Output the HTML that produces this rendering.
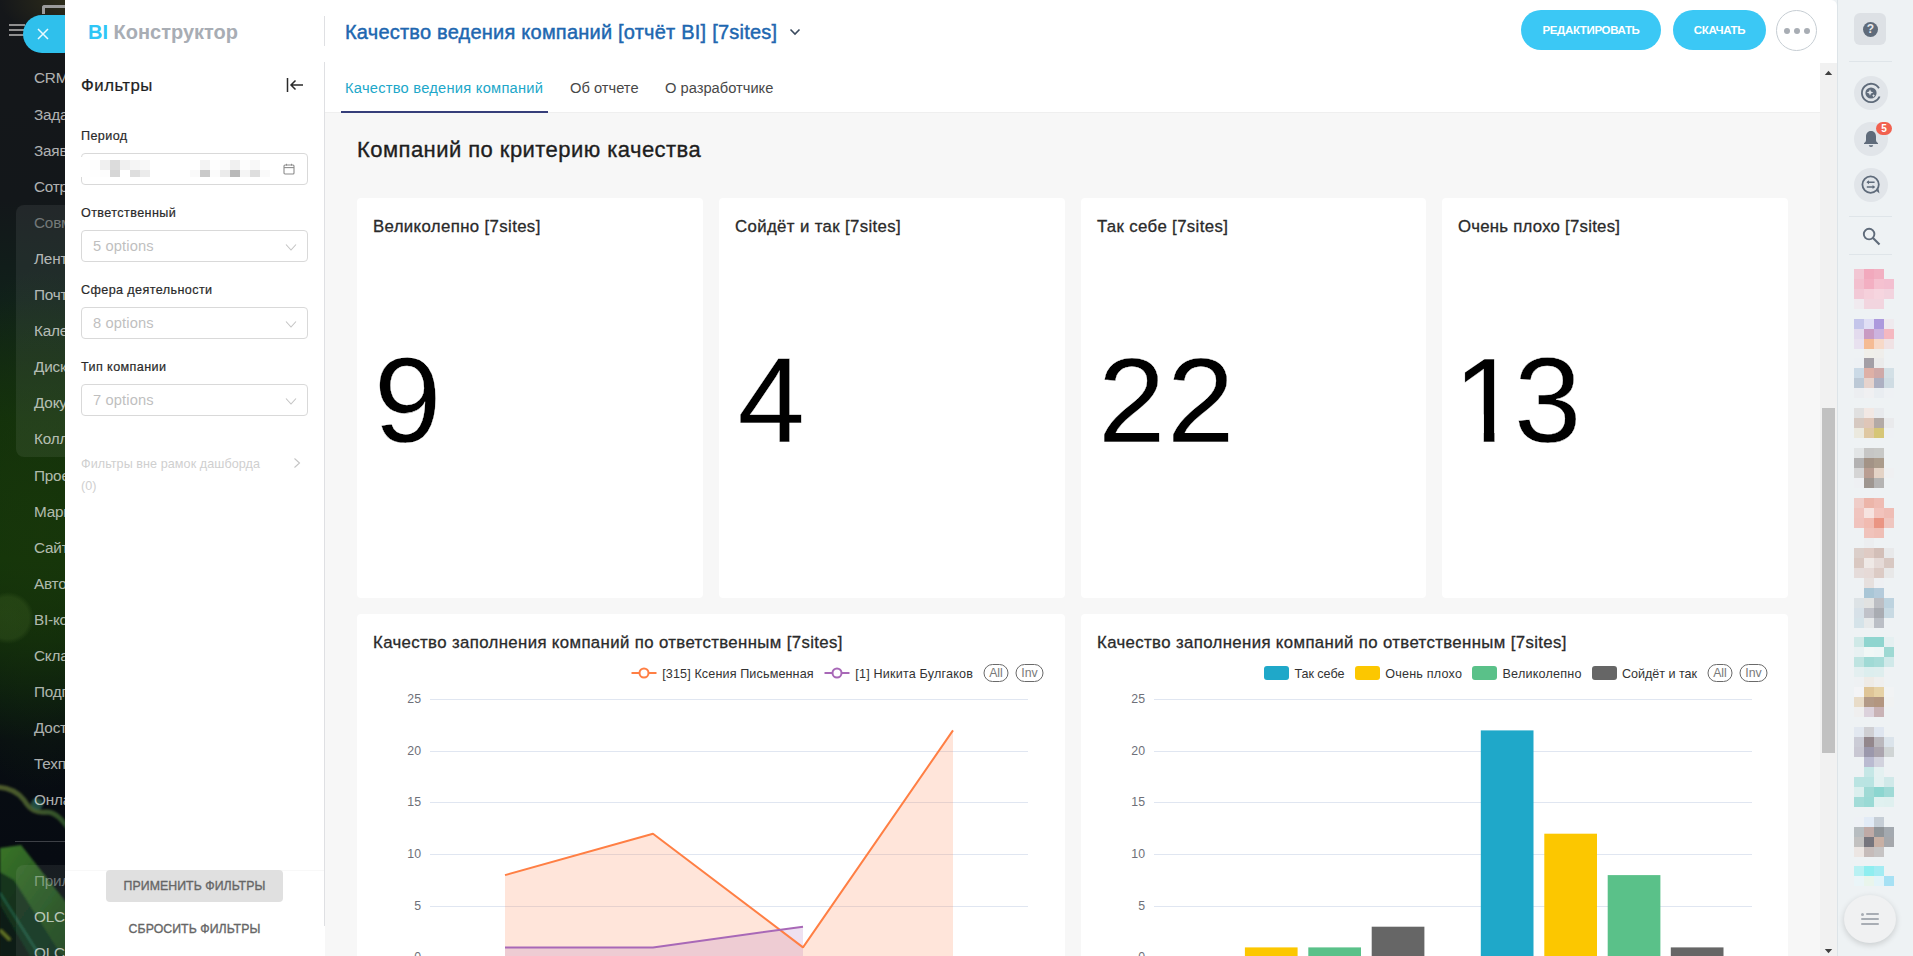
<!DOCTYPE html>
<html lang="ru">
<head>
<meta charset="utf-8">
<title>BI Конструктор</title>
<style>
*{box-sizing:border-box;margin:0;padding:0}
html,body{width:1913px;height:956px;overflow:hidden}
body{position:relative;font-family:"Liberation Sans",sans-serif;background:#0a1210;color:#1e1e1e}
.abs{position:absolute}
/* ---------- left dark menu ---------- */
#lm{position:absolute;left:0;top:0;width:80px;height:956px;overflow:hidden;
 background:
  radial-gradient(ellipse 75px 40px at 75px 0px,rgba(52,50,26,.9),rgba(52,50,26,0) 100%),
  radial-gradient(circle 26px at 8px 618px,rgba(70,105,40,.33) 0,rgba(70,105,40,.3) 80%,rgba(70,105,40,0) 100%),
  radial-gradient(ellipse 120px 260px at 40px 530px,rgba(24,54,10,.8),rgba(24,54,10,0) 100%),
  linear-gradient(180deg,#15171a 0px,#13171a 200px,#10201a 300px,#12300c 420px,#14360a 560px,#10290c 640px,#0a1810 700px,#080d12 740px,#070b12 860px,#0b1a14 956px)}
#lm .mi{position:absolute;left:34px;font-size:15.3px;line-height:20px;color:rgba(255,255,255,.68);white-space:nowrap;letter-spacing:-.2px}
#lm .mi.dim{color:rgba(255,255,255,.38)}
#lm .grp{position:absolute;left:16px;width:70px;border-radius:8px;background:rgba(255,255,255,.07)}
/* ---------- slider panel ---------- */
#panel{position:absolute;left:65px;top:0;width:1772px;height:956px;background:#fff;border-radius:0 6px 0 0;overflow:hidden}
#rbar{position:absolute;left:1837px;top:0;width:76px;height:956px;background:#eef2f4;border-left:1px solid #dde4e8}
#rbk{position:absolute;left:1820px;top:0;width:20px;height:20px;background:#eef2f4}

/* panel internals: coordinates relative to panel (x-65) */
#panel .logo{position:absolute;left:23px;top:19px;font-size:20px;line-height:26px;font-weight:bold;letter-spacing:0;white-space:nowrap}
#panel .logo b{color:#2fc6f6}
#panel .logo span{color:#a8adb4}
.vline{position:absolute;left:259px;width:1px;background:#dfe0e3}
#title{position:absolute;left:280px;top:19px;font-size:20px;line-height:26px;color:#2067b0;white-space:nowrap;-webkit-text-stroke:.45px #2067b0;letter-spacing:.22px}
.btn{position:absolute;top:10px;height:40px;border-radius:20px;background:#3bc8f5;color:#fff;font-weight:bold;font-size:11.5px;line-height:40px;text-align:center;white-space:nowrap;letter-spacing:-.35px}
#more{position:absolute;left:1711px;top:10px;width:41px;height:41px;border-radius:50%;border:1px solid #c6cdd3;background:#fff}
#more i{position:absolute;top:17px;width:6px;height:6px;border-radius:50%;background:#a8adb4}
/* filter bar */
#fb{position:absolute;left:0;top:62px;width:259px;height:894px;background:#fff}
#fb .h{position:absolute;left:16px;top:14px;font-size:16.8px;line-height:20px;color:#1e1e1e;-webkit-text-stroke:.2px #1e1e1e;letter-spacing:.5px}
#fb .lbl{position:absolute;left:16px;margin-top:1px;font-size:12.6px;line-height:16px;color:#2a2a2a;-webkit-text-stroke:.2px #2a2a2a;letter-spacing:.4px;white-space:nowrap}
#fb .sel{position:absolute;left:16px;width:227px;height:32px;border:1px solid #d9d9d9;border-radius:4px;background:#fff;font-size:14.7px;line-height:30px;padding-left:11px;color:#bfbfbf;letter-spacing:.12px}
#fb .sel svg{position:absolute;right:10px;top:10px}
#fb .out{position:absolute;left:16px;top:391px;font-size:12.6px;line-height:22px;color:#cfcfcf;letter-spacing:.06px;white-space:nowrap}
#fb .apply{position:absolute;left:41px;top:808px;width:177px;height:32px;border-radius:4px;background:#e0e0e0;color:#666;font-size:12.3px;line-height:32px;text-align:center;-webkit-text-stroke:.35px #666;letter-spacing:.06px}
#fb .reset{position:absolute;left:41px;top:851px;width:177px;height:32px;color:#666;font-size:12.3px;line-height:32px;text-align:center;-webkit-text-stroke:.35px #666;letter-spacing:.06px}
/* main */
#main{position:absolute;left:260px;top:62px;width:1495px;height:894px;background:#f7f7f7;overflow:hidden}
#tabs{position:absolute;left:0;top:0;width:1495px;height:51px;background:#fff;border-bottom:1px solid #efefef}
#tabs .t{position:absolute;top:16px;font-size:14.7px;line-height:20px;color:#484848;white-space:nowrap;letter-spacing:0}
#tabs .t.a{color:#20a7c9;letter-spacing:.24px}
#tabs .ink{position:absolute;left:16px;top:49px;width:207px;height:2px;background:#363e7a}
#sect{position:absolute;left:32px;top:74px;font-size:22px;line-height:28px;color:#1e1e1e;white-space:nowrap;-webkit-text-stroke:.35px #1e1e1e;letter-spacing:.45px}
.card{position:absolute;background:#fff;border-radius:4px}
.card .ct{position:absolute;left:16px;top:18px;font-size:16.8px;line-height:22px;color:#2a2a2a;white-space:nowrap;-webkit-text-stroke:.3px #2a2a2a;letter-spacing:.37px}
.card .big{position:absolute;left:17px;top:132.3px;font-size:121px;line-height:140px;color:#000;white-space:nowrap;-webkit-text-stroke:.3px #fff;letter-spacing:1.7px}
.card .big .one{display:inline-block;letter-spacing:-6.7px;margin-left:-5.7px;clip-path:polygon(0 0,.3395em 0,.3395em 100%,.252em 100%,.252em 60%,0 60%)}
/* scrollbar */
#sb{position:absolute;left:1755px;top:63px;width:17px;height:893px;background:#f1f1f1}
#sb .th{position:absolute;left:2px;top:345px;width:13px;height:345px;background:#c1c1c1}

.rdiv{left:11px;width:43px;height:1px;background:#dfe5e9}
.rc{left:16px;width:34px;height:34px;border-radius:50%;background:#e1e5e9}
</style>
</head>
<body>
<div id="lm">
<svg class="abs" style="left:0;top:760px" width="80" height="196" viewBox="0 760 80 196">
<defs><linearGradient id="lf" x1="0" y1="0" x2="1" y2="1"><stop offset="0" stop-color="#3a7429"/><stop offset=".55" stop-color="#245420"/><stop offset="1" stop-color="#173a18"/></linearGradient>
<linearGradient id="st" x1="0" y1="0" x2="1" y2="0"><stop offset="0" stop-color="#7e8f3c"/><stop offset=".5" stop-color="#6a8a3e"/><stop offset="1" stop-color="#3f7a35"/></linearGradient>
<filter id="bl"><feGaussianBlur stdDeviation="1.2"/></filter></defs>
<g filter="url(#bl)">
<path d="M0 848 L21 845 L80 920 L80 956 L0 956Z" fill="url(#lf)"/>
<path d="M0 872 L14 880 L62 956 L0 956Z" fill="#0e2c1f" opacity=".85"/>
<path d="M0 905 L30 956 L0 956Z" fill="#0a1a14" opacity=".9"/>
<path d="M0 893 L40 956" stroke="#2a7a5a" stroke-width="2" opacity=".6" fill="none"/>
<path d="M0 930 L10 940" stroke="#8a9a30" stroke-width="3" opacity=".7" fill="none"/>
<path d="M-2 787 C10 788 18 792 24 800 C30 810 36 813 46 812 C56 812 62 820 70 830" stroke="url(#st)" stroke-width="5" fill="none" opacity=".6"/>
<circle cx="37" cy="804" r="6" fill="#2d6a55" opacity=".7"/>
</g></svg>
<div class="grp" style="top:205px;height:252px"></div>
<div class="grp" style="top:865px;height:120px"></div>
<div class="abs" style="left:15px;top:841px;width:60px;height:1px;background:rgba(255,255,255,.22)"></div>
<div class="mi" style="top:68px">CRM</div>
<div class="mi" style="top:105px">Задачи и Проекты</div>
<div class="mi" style="top:141px">Заявки</div>
<div class="mi" style="top:177px">Сотрудники</div>
<div class="mi dim" style="top:213px">Совместная работа</div>
<div class="mi" style="top:249px">Лента</div>
<div class="mi" style="top:285px">Почта</div>
<div class="mi" style="top:321px">Календарь</div>
<div class="mi" style="top:357px">Диск</div>
<div class="mi" style="top:393px">Документы</div>
<div class="mi" style="top:429px">Коллабы</div>
<div class="mi" style="top:466px">Проекты</div>
<div class="mi" style="top:502px">Маркетинг</div>
<div class="mi" style="top:538px">Сайты и Магазины</div>
<div class="mi" style="top:574px">Автоматизация</div>
<div class="mi" style="top:610px">BI-конструктор</div>
<div class="mi" style="top:646px">Склад</div>
<div class="mi" style="top:682px">Подпись</div>
<div class="mi" style="top:718px">Доставка</div>
<div class="mi" style="top:754px">Техподдержка</div>
<div class="mi" style="top:790px">Онлайн-запись</div>
<div class="mi dim" style="top:871px">Приложения</div>
<div class="mi" style="top:907px">OLCK</div>
<div class="mi" style="top:943px">OLCK</div>
<div class="abs" style="left:9px;top:24px;width:16px;height:2px;background:#8f8f8f;box-shadow:0 5px 0 #8f8f8f,0 10px 0 #8f8f8f"></div>
<div class="abs" style="left:42px;top:5px;width:30px;height:9px;border:3px solid #9b9b9b;border-bottom:none;border-right:none;border-radius:3px 0 0 0"></div>
<div class="abs" style="left:23px;top:15px;width:60px;height:38px;border-radius:19px;background:#2fc0ec"></div>
<svg class="abs" style="left:37px;top:28px" width="12" height="12" viewBox="0 0 12 12"><path d="M1 1 L11 11 M11 1 L1 11" stroke="#eafaff" stroke-width="1.5"/></svg>
</div>
<div id="rbk"></div>
<div id="panel">
<div class="logo"><b>BI</b> <span>Конструктор</span></div>
<div class="vline" style="top:16px;height:30px"></div>
<div class="vline" style="top:62px;height:864px"></div>
<div id="title">Качество ведения компаний [отчёт BI] [7sites]</div>
<svg class="abs" style="left:724px;top:27px" width="12" height="10" viewBox="0 0 12 10"><path d="M1.5 2.5 L6 7 L10.5 2.5" fill="none" stroke="#3a4a5e" stroke-width="1.6"/></svg>
<div class="btn" style="left:1456px;width:140px">РЕДАКТИРОВАТЬ</div>
<div class="btn" style="left:1608px;width:93px">СКАЧАТЬ</div>
<div id="more"><i style="left:7px"></i><i style="left:17px"></i><i style="left:27px"></i></div>

<div id="fb">
 <div class="h">Фильтры</div>
 <svg class="abs" style="left:221px;top:14px" width="18" height="18" viewBox="0 0 18 18"><path d="M1.5 2 V16 M17 9 H5 M9.5 4.5 L5 9 L9.5 13.5" fill="none" stroke="#2a2a2a" stroke-width="1.5"/></svg>
 <div class="lbl" style="top:65px">Период</div>
 <div class="sel" style="top:91px" id="per"><svg class="abs" style="left:-1px;top:-1px" width="227" height="32" viewBox="0 0 227 32" shape-rendering="crispEdges"><rect x="0" y="4" width="9" height="20" fill="#fff"/><rect x="9" y="7" width="10" height="10" fill="#fdfdfd"/><rect x="9" y="17" width="10" height="7" fill="#fefefe"/><rect x="19" y="7" width="10" height="10" fill="#f0f0f0"/><rect x="19" y="17" width="10" height="7" fill="#fdfdfd"/><rect x="29" y="7" width="10" height="10" fill="#dcdcdc"/><rect x="29" y="17" width="10" height="7" fill="#d6d6d6"/><rect x="39" y="7" width="10" height="10" fill="#f0f0f0"/><rect x="39" y="17" width="10" height="7" fill="#ffffff"/><rect x="49" y="7" width="10" height="10" fill="#f5f5f5"/><rect x="49" y="17" width="10" height="7" fill="#dedede"/><rect x="59" y="7" width="10" height="10" fill="#f8f8f8"/><rect x="59" y="17" width="10" height="7" fill="#ebebeb"/><rect x="109" y="7" width="10" height="10" fill="#ffffff"/><rect x="109" y="17" width="10" height="7" fill="#fafafa"/><rect x="119" y="7" width="10" height="10" fill="#f3f3f3"/><rect x="119" y="17" width="10" height="7" fill="#c9c9c9"/><rect x="129" y="7" width="10" height="10" fill="#fefefe"/><rect x="129" y="17" width="10" height="7" fill="#fbfbfb"/><rect x="139" y="7" width="10" height="10" fill="#fafafa"/><rect x="139" y="17" width="10" height="7" fill="#ebebeb"/><rect x="149" y="7" width="10" height="10" fill="#f0f0f0"/><rect x="149" y="17" width="10" height="7" fill="#b9b9b9"/><rect x="159" y="7" width="10" height="10" fill="#fdfdfd"/><rect x="159" y="17" width="10" height="7" fill="#f5f5f5"/><rect x="169" y="7" width="10" height="10" fill="#f8f8f8"/><rect x="169" y="17" width="10" height="7" fill="#dedede"/><rect x="179" y="7" width="10" height="10" fill="#ffffff"/><rect x="179" y="17" width="10" height="7" fill="#fafafa"/></svg><svg class="abs" style="left:201px;top:9px" width="12" height="12" viewBox="0 0 12 12"><rect x="1" y="2" width="10" height="9" rx="1" fill="none" stroke="#8c8c8c" stroke-width="1.1"/><path d="M1 4.6 H11" stroke="#8c8c8c" stroke-width="1.1"/><path d="M3.5 0.8 V2.6 M8.5 0.8 V2.6" stroke="#8c8c8c" stroke-width="1"/></svg></div>
 <div class="lbl" style="top:142px">Ответственный</div>
 <div class="sel" style="top:168px">5 options<svg width="12" height="12" viewBox="0 0 12 12"><path d="M1 3.5 L6 9 L11 3.5" fill="none" stroke="#c4c4c4" stroke-width="1.1"/></svg></div>
 <div class="lbl" style="top:219px">Сфера деятельности</div>
 <div class="sel" style="top:245px">8 options<svg width="12" height="12" viewBox="0 0 12 12"><path d="M1 3.5 L6 9 L11 3.5" fill="none" stroke="#c4c4c4" stroke-width="1.1"/></svg></div>
 <div class="lbl" style="top:296px">Тип компании</div>
 <div class="sel" style="top:322px">7 options<svg width="12" height="12" viewBox="0 0 12 12"><path d="M1 3.5 L6 9 L11 3.5" fill="none" stroke="#c4c4c4" stroke-width="1.1"/></svg></div>
 <div class="out">Фильтры вне рамок дашборда<br>(0)</div>
 <svg class="abs" style="left:227px;top:395px" width="10" height="12" viewBox="0 0 10 12"><path d="M2.5 1.5 L7.5 6 L2.5 10.5" fill="none" stroke="#c4c4c4" stroke-width="1.1"/></svg>
 <div class="abs" style="left:0;top:808px;width:259px;height:1px;background:#f8f8f8"></div>
 <div class="apply">ПРИМЕНИТЬ ФИЛЬТРЫ</div>
 <div class="reset">СБРОСИТЬ ФИЛЬТРЫ</div>
</div>

<div id="main">
 <div id="tabs">
  <div class="t a" style="left:20px">Качество ведения компаний</div>
  <div class="t" style="left:245px">Об отчете</div>
  <div class="t" style="left:340px">О разработчике</div>
  <div class="ink"></div>
 </div>
 <div id="sect">Компаний по критерию качества</div>
 <div class="card" style="left:32px;top:136px;width:346px;height:400px"><div class="ct">Великолепно [7sites]</div><div class="big">9</div></div>
 <div class="card" style="left:394px;top:136px;width:346px;height:400px"><div class="ct">Сойдёт и так [7sites]</div><div class="big" style="left:18.5px">4</div></div>
 <div class="card" style="left:756px;top:136px;width:345px;height:400px"><div class="ct">Так себе [7sites]</div><div class="big">22</div></div>
 <div class="card" style="left:1117px;top:136px;width:346px;height:400px"><div class="ct" style="letter-spacing:.24px">Очень плохо [7sites]</div><div class="big"><span class="one">1</span>3</div></div>
 <div class="card" id="c1" style="left:32px;top:552px;width:708px;height:360px"><div class="ct">Качество заполнения компаний по ответственным [7sites]</div></div>
 <div class="card" id="c2" style="left:756px;top:552px;width:707px;height:360px"><div class="ct">Качество заполнения компаний по ответственным [7sites]</div></div>
<svg class="abs" style="left:0;top:0" width="1495" height="894" viewBox="0 0 1495 894" font-family="Liberation Sans, sans-serif">
<line x1="105" x2="703" y1="637.5" y2="637.5" stroke="#e0e6f1" stroke-width="1"/>
<text x="96" y="640.7" text-anchor="end" font-size="12.3" fill="#6e7079">25</text>
<line x1="105" x2="703" y1="689.5" y2="689.5" stroke="#e0e6f1" stroke-width="1"/>
<text x="96" y="692.7" text-anchor="end" font-size="12.3" fill="#6e7079">20</text>
<line x1="105" x2="703" y1="740.5" y2="740.5" stroke="#e0e6f1" stroke-width="1"/>
<text x="96" y="743.7" text-anchor="end" font-size="12.3" fill="#6e7079">15</text>
<line x1="105" x2="703" y1="792.5" y2="792.5" stroke="#e0e6f1" stroke-width="1"/>
<text x="96" y="795.7" text-anchor="end" font-size="12.3" fill="#6e7079">10</text>
<line x1="105" x2="703" y1="844.5" y2="844.5" stroke="#e0e6f1" stroke-width="1"/>
<text x="96" y="847.7" text-anchor="end" font-size="12.3" fill="#6e7079">5</text>
<line x1="105" x2="703" y1="895.5" y2="895.5" stroke="#e0e6f1" stroke-width="1"/>
<text x="96" y="898.7" text-anchor="end" font-size="12.3" fill="#6e7079">0</text>
<line x1="829" x2="1427" y1="637.5" y2="637.5" stroke="#e0e6f1" stroke-width="1"/>
<text x="820" y="640.7" text-anchor="end" font-size="12.3" fill="#6e7079">25</text>
<line x1="829" x2="1427" y1="689.5" y2="689.5" stroke="#e0e6f1" stroke-width="1"/>
<text x="820" y="692.7" text-anchor="end" font-size="12.3" fill="#6e7079">20</text>
<line x1="829" x2="1427" y1="740.5" y2="740.5" stroke="#e0e6f1" stroke-width="1"/>
<text x="820" y="743.7" text-anchor="end" font-size="12.3" fill="#6e7079">15</text>
<line x1="829" x2="1427" y1="792.5" y2="792.5" stroke="#e0e6f1" stroke-width="1"/>
<text x="820" y="795.7" text-anchor="end" font-size="12.3" fill="#6e7079">10</text>
<line x1="829" x2="1427" y1="844.5" y2="844.5" stroke="#e0e6f1" stroke-width="1"/>
<text x="820" y="847.7" text-anchor="end" font-size="12.3" fill="#6e7079">5</text>
<line x1="829" x2="1427" y1="895.5" y2="895.5" stroke="#e0e6f1" stroke-width="1"/>
<text x="820" y="898.7" text-anchor="end" font-size="12.3" fill="#6e7079">0</text>
<path d="M180.0 813.1 L328.0 771.7 L478.0 885.4 L628.0 668.4 L628.0 895.7 L180.0 895.7 Z" fill="#ff7f44" fill-opacity=".2"/>
<path d="M180.0 885.4 L328.0 885.4 L478.0 864.7 L478.0 895.7 L180.0 895.7 Z" fill="#a868b7" fill-opacity=".2"/>
<path d="M180.0 813.1 L328.0 771.7 L478.0 885.4 L628.0 668.4" fill="none" stroke="#ff7f44" stroke-width="2" stroke-linejoin="bevel"/>
<path d="M180.0 885.4 L328.0 885.4 L478.0 864.7" fill="none" stroke="#a868b7" stroke-width="2" stroke-linejoin="bevel"/>
<rect x="919.9" y="885.4" width="52.7" height="15.3" fill="#fcc700"/>
<rect x="983.3" y="885.4" width="52.7" height="15.3" fill="#5ac189"/>
<rect x="1046.7" y="864.7" width="52.7" height="36.0" fill="#666666"/>
<rect x="1155.8" y="668.4" width="52.7" height="232.3" fill="#1fa8c9"/>
<rect x="1219.3" y="771.7" width="52.7" height="129.0" fill="#fcc700"/>
<rect x="1282.7" y="813.1" width="52.7" height="87.6" fill="#5ac189"/>
<rect x="1345.8" y="885.4" width="52.7" height="15.3" fill="#666666"/>
<line x1="306.5" x2="331.5" y1="611" y2="611" stroke="#ff7f44" stroke-width="2"/><circle cx="319.0" cy="611" r="4.5" fill="#fff" stroke="#ff7f44" stroke-width="2"/>
<text x="337.2" y="615.5" font-size="12.6" fill="#333" letter-spacing=".12">[315] Ксения Письменная</text>
<line x1="499.5" x2="524.5" y1="611" y2="611" stroke="#a868b7" stroke-width="2"/><circle cx="512.0" cy="611" r="4.5" fill="#fff" stroke="#a868b7" stroke-width="2"/>
<text x="530.3" y="615.5" font-size="12.6" fill="#333" letter-spacing=".18">[1] Никита Булгаков</text>
<rect x="659.0" y="602.5" width="24" height="17" rx="8.5" fill="#fff" stroke="#6a6a6a" stroke-width="1"/><text x="671.0" y="615.2" font-size="12.3" fill="#7a7a7a" text-anchor="middle">All</text>
<rect x="691.0" y="602.5" width="27" height="17" rx="8.5" fill="#fff" stroke="#6a6a6a" stroke-width="1"/><text x="704.5" y="615.2" font-size="12.3" fill="#7a7a7a" text-anchor="middle">Inv</text>
<rect x="939" y="604" width="25" height="14" rx="3" fill="#1fa8c9"/>
<text x="969.4" y="615.5" font-size="12.6" fill="#333" letter-spacing="-.05">Так себе</text>
<rect x="1030" y="604" width="25" height="14" rx="3" fill="#fcc700"/>
<text x="1060.3" y="615.5" font-size="12.6" fill="#333" letter-spacing=".19">Очень плохо</text>
<rect x="1147" y="604" width="25" height="14" rx="3" fill="#5ac189"/>
<text x="1177.5" y="615.5" font-size="12.6" fill="#333" letter-spacing=".21">Великолепно</text>
<rect x="1267" y="604" width="25" height="14" rx="3" fill="#666666"/>
<text x="1297.0" y="615.5" font-size="12.6" fill="#333" letter-spacing="-.04">Сойдёт и так</text>
<rect x="1383.0" y="602.5" width="24" height="17" rx="8.5" fill="#fff" stroke="#6a6a6a" stroke-width="1"/><text x="1395.0" y="615.2" font-size="12.3" fill="#7a7a7a" text-anchor="middle">All</text>
<rect x="1415.0" y="602.5" width="27" height="17" rx="8.5" fill="#fff" stroke="#6a6a6a" stroke-width="1"/><text x="1428.5" y="615.2" font-size="12.3" fill="#7a7a7a" text-anchor="middle">Inv</text>
</svg>
</div>
<div id="sb"><div class="th"></div>
 <svg class="abs" style="left:4px;top:7px" width="9" height="6" viewBox="0 0 9 6"><path d="M0.8 5 L4.5 0.8 L8.2 5Z" fill="#404040"/></svg>
 <svg class="abs" style="left:4px;top:885px" width="9" height="6" viewBox="0 0 9 6"><path d="M0.8 1 L4.5 5.2 L8.2 1Z" fill="#404040"/></svg>
</div>
</div>
<div id="rbar"><svg class="abs" style="left:0;top:0" width="75" height="956" viewBox="0 0 75 956" shape-rendering="crispEdges">
<rect x="16" y="269" width="10" height="10" fill="#f2c6d3"/>
<rect x="26" y="269" width="10" height="10" fill="#f2a9bd"/>
<rect x="36" y="269" width="10" height="10" fill="#f2b0c2"/>
<rect x="16" y="279" width="10" height="10" fill="#f3bfce"/>
<rect x="26" y="279" width="10" height="10" fill="#f3afc2"/>
<rect x="36" y="279" width="10" height="10" fill="#f5c1d0"/>
<rect x="46" y="279" width="10" height="10" fill="#f3bfd0"/>
<rect x="16" y="289" width="10" height="10" fill="#f2c9d6"/>
<rect x="26" y="289" width="10" height="10" fill="#f5d0db"/>
<rect x="36" y="289" width="10" height="10" fill="#f6d5df"/>
<rect x="46" y="289" width="10" height="10" fill="#f2d3de"/>
<rect x="16" y="299" width="10" height="10" fill="#f0eaef"/>
<rect x="26" y="299" width="10" height="10" fill="#f2d5df"/>
<rect x="36" y="299" width="10" height="10" fill="#f2d5df"/>
<rect x="16" y="319" width="10" height="10" fill="#c4c5ea"/>
<rect x="26" y="319" width="10" height="10" fill="#e0dff5"/>
<rect x="36" y="319" width="10" height="10" fill="#ad9add"/>
<rect x="46" y="319" width="10" height="10" fill="#efeaee"/>
<rect x="16" y="329" width="10" height="10" fill="#e3dbee"/>
<rect x="26" y="329" width="10" height="10" fill="#c99bc3"/>
<rect x="36" y="329" width="10" height="10" fill="#ccb3df"/>
<rect x="46" y="329" width="10" height="10" fill="#f5b8c0"/>
<rect x="16" y="339" width="10" height="10" fill="#e8e1ef"/>
<rect x="26" y="339" width="10" height="10" fill="#f5bb94"/>
<rect x="36" y="339" width="10" height="10" fill="#f7d9c8"/>
<rect x="46" y="339" width="10" height="10" fill="#f0e2e4"/>
<rect x="26" y="349" width="10" height="10" fill="#f0efea"/>
<rect x="36" y="349" width="10" height="10" fill="#efeeeb"/>
<rect x="16" y="358" width="10" height="10" fill="#edf1f4"/>
<rect x="26" y="358" width="10" height="10" fill="#a39fa6"/>
<rect x="36" y="358" width="10" height="10" fill="#ebebeb"/>
<rect x="16" y="368" width="10" height="10" fill="#cbdae6"/>
<rect x="26" y="368" width="10" height="10" fill="#deb0a6"/>
<rect x="36" y="368" width="10" height="10" fill="#cfa9a8"/>
<rect x="46" y="368" width="10" height="10" fill="#d3e0e6"/>
<rect x="16" y="378" width="10" height="10" fill="#bcc9d6"/>
<rect x="26" y="378" width="10" height="10" fill="#e6d3cd"/>
<rect x="36" y="378" width="10" height="10" fill="#adb0c2"/>
<rect x="46" y="378" width="10" height="10" fill="#cfdce3"/>
<rect x="16" y="388" width="10" height="10" fill="#eceef1"/>
<rect x="26" y="388" width="10" height="10" fill="#f0f0f2"/>
<rect x="36" y="388" width="10" height="10" fill="#e9edf1"/>
<rect x="46" y="388" width="10" height="10" fill="#eef1f4"/>
<rect x="16" y="408" width="10" height="10" fill="#e0e0e0"/>
<rect x="26" y="408" width="10" height="10" fill="#f2e8e4"/>
<rect x="36" y="408" width="10" height="10" fill="#e8eaed"/>
<rect x="16" y="418" width="10" height="10" fill="#d6c9c1"/>
<rect x="26" y="418" width="10" height="10" fill="#dfc6b8"/>
<rect x="36" y="418" width="10" height="10" fill="#b3aaa6"/>
<rect x="46" y="418" width="10" height="10" fill="#e9eaec"/>
<rect x="16" y="428" width="10" height="10" fill="#ebe9de"/>
<rect x="26" y="428" width="10" height="10" fill="#dfc8a2"/>
<rect x="36" y="428" width="10" height="10" fill="#d6c677"/>
<rect x="46" y="428" width="10" height="10" fill="#eef1f4"/>
<rect x="16" y="448" width="10" height="10" fill="#e2e5e6"/>
<rect x="26" y="448" width="10" height="10" fill="#c6c6c5"/>
<rect x="36" y="448" width="10" height="10" fill="#c8c9c7"/>
<rect x="16" y="458" width="10" height="10" fill="#b3b2b2"/>
<rect x="26" y="458" width="10" height="10" fill="#a39386"/>
<rect x="36" y="458" width="10" height="10" fill="#ab9c8c"/>
<rect x="16" y="468" width="10" height="10" fill="#d5d5d5"/>
<rect x="26" y="468" width="10" height="10" fill="#b99e92"/>
<rect x="36" y="468" width="10" height="10" fill="#e4d3c6"/>
<rect x="46" y="468" width="10" height="10" fill="#eff0f2"/>
<rect x="16" y="478" width="10" height="10" fill="#eef0f3"/>
<rect x="26" y="478" width="10" height="10" fill="#9e9690"/>
<rect x="36" y="478" width="10" height="10" fill="#b5b4b3"/>
<rect x="16" y="498" width="10" height="10" fill="#efcdc8"/>
<rect x="26" y="498" width="10" height="10" fill="#ecb5a9"/>
<rect x="36" y="498" width="10" height="10" fill="#efbcb3"/>
<rect x="16" y="508" width="10" height="10" fill="#f0c5bf"/>
<rect x="26" y="508" width="10" height="10" fill="#f6e3e0"/>
<rect x="36" y="508" width="10" height="10" fill="#f2c3bc"/>
<rect x="46" y="508" width="10" height="10" fill="#efbdb5"/>
<rect x="16" y="518" width="10" height="10" fill="#f0c3bd"/>
<rect x="26" y="518" width="10" height="10" fill="#f1bbb1"/>
<rect x="36" y="518" width="10" height="10" fill="#ea9583"/>
<rect x="46" y="518" width="10" height="10" fill="#efc6bf"/>
<rect x="26" y="528" width="10" height="10" fill="#f0c3bb"/>
<rect x="36" y="528" width="10" height="10" fill="#efbfb6"/>
<rect x="26" y="538" width="10" height="10" fill="#eceef0"/>
<rect x="16" y="548" width="10" height="10" fill="#dbcfca"/>
<rect x="26" y="548" width="10" height="10" fill="#dfcbc4"/>
<rect x="36" y="548" width="10" height="10" fill="#d3bfb8"/>
<rect x="46" y="548" width="10" height="10" fill="#e8e9ea"/>
<rect x="16" y="558" width="10" height="10" fill="#d9c8c1"/>
<rect x="26" y="558" width="10" height="10" fill="#efe9e6"/>
<rect x="36" y="558" width="10" height="10" fill="#e5dad7"/>
<rect x="46" y="558" width="10" height="10" fill="#d8c8c2"/>
<rect x="16" y="568" width="10" height="10" fill="#e5dcda"/>
<rect x="26" y="568" width="10" height="10" fill="#e6dad7"/>
<rect x="36" y="568" width="10" height="10" fill="#dccbc5"/>
<rect x="46" y="568" width="10" height="10" fill="#e8e8e8"/>
<rect x="26" y="578" width="10" height="10" fill="#e6e0de"/>
<rect x="36" y="578" width="10" height="10" fill="#eef0f3"/>
<rect x="26" y="588" width="10" height="10" fill="#a9c6d6"/>
<rect x="36" y="588" width="10" height="10" fill="#b4cbdb"/>
<rect x="16" y="598" width="10" height="10" fill="#dde3e6"/>
<rect x="26" y="598" width="10" height="10" fill="#e1e2e1"/>
<rect x="36" y="598" width="10" height="10" fill="#bcbec3"/>
<rect x="46" y="598" width="10" height="10" fill="#bdd3df"/>
<rect x="16" y="608" width="10" height="10" fill="#d7e1e8"/>
<rect x="26" y="608" width="10" height="10" fill="#c0c2c9"/>
<rect x="36" y="608" width="10" height="10" fill="#a9acb2"/>
<rect x="46" y="608" width="10" height="10" fill="#c8dae3"/>
<rect x="16" y="618" width="10" height="10" fill="#d5e3e9"/>
<rect x="26" y="618" width="10" height="10" fill="#e6e9ea"/>
<rect x="36" y="618" width="10" height="10" fill="#bbbfc6"/>
<rect x="16" y="637" width="10" height="10" fill="#cfe9e7"/>
<rect x="26" y="637" width="10" height="10" fill="#8fd5cf"/>
<rect x="36" y="637" width="10" height="10" fill="#8fd5cf"/>
<rect x="46" y="637" width="10" height="10" fill="#e5f0f1"/>
<rect x="16" y="647" width="10" height="10" fill="#e8f1f2"/>
<rect x="26" y="647" width="10" height="10" fill="#f1f7f6"/>
<rect x="36" y="647" width="10" height="10" fill="#eef6f6"/>
<rect x="46" y="647" width="10" height="10" fill="#9ed9d3"/>
<rect x="16" y="657" width="10" height="10" fill="#bfe4e1"/>
<rect x="26" y="657" width="10" height="10" fill="#a0dad5"/>
<rect x="36" y="657" width="10" height="10" fill="#a7dcd8"/>
<rect x="46" y="657" width="10" height="10" fill="#d0e9e9"/>
<rect x="16" y="667" width="10" height="10" fill="#e3eff0"/>
<rect x="26" y="667" width="10" height="10" fill="#dceeee"/>
<rect x="36" y="667" width="10" height="10" fill="#deeeee"/>
<rect x="16" y="677" width="10" height="10" fill="#eef1f3"/>
<rect x="26" y="677" width="10" height="10" fill="#eeebe6"/>
<rect x="36" y="677" width="10" height="10" fill="#efefee"/>
<rect x="16" y="687" width="10" height="10" fill="#f3f4f6"/>
<rect x="26" y="687" width="10" height="10" fill="#dfc597"/>
<rect x="36" y="687" width="10" height="10" fill="#e6d2a6"/>
<rect x="46" y="687" width="10" height="10" fill="#f1f3f4"/>
<rect x="16" y="697" width="10" height="10" fill="#e8dcc8"/>
<rect x="26" y="697" width="10" height="10" fill="#b39a87"/>
<rect x="36" y="697" width="10" height="10" fill="#b39680"/>
<rect x="46" y="697" width="10" height="10" fill="#f0f2f2"/>
<rect x="16" y="707" width="10" height="10" fill="#efefef"/>
<rect x="26" y="707" width="10" height="10" fill="#dcd2dc"/>
<rect x="36" y="707" width="10" height="10" fill="#c9b3b6"/>
<rect x="16" y="727" width="10" height="10" fill="#e2e8f0"/>
<rect x="26" y="727" width="10" height="10" fill="#cfcfd3"/>
<rect x="36" y="727" width="10" height="10" fill="#dfe6f0"/>
<rect x="16" y="737" width="10" height="10" fill="#cbccd6"/>
<rect x="26" y="737" width="10" height="10" fill="#93878c"/>
<rect x="36" y="737" width="10" height="10" fill="#bab8bd"/>
<rect x="46" y="737" width="10" height="10" fill="#dbe4eb"/>
<rect x="16" y="747" width="10" height="10" fill="#c9c8d3"/>
<rect x="26" y="747" width="10" height="10" fill="#9b98ac"/>
<rect x="36" y="747" width="10" height="10" fill="#aba5ae"/>
<rect x="46" y="747" width="10" height="10" fill="#d0d5d5"/>
<rect x="26" y="757" width="10" height="10" fill="#babbd1"/>
<rect x="36" y="757" width="10" height="10" fill="#d2d3de"/>
<rect x="26" y="767" width="10" height="10" fill="#c5e7e6"/>
<rect x="36" y="767" width="10" height="10" fill="#e4f1f1"/>
<rect x="16" y="777" width="10" height="10" fill="#bae4e2"/>
<rect x="26" y="777" width="10" height="10" fill="#b9e4e2"/>
<rect x="36" y="777" width="10" height="10" fill="#e3f1f1"/>
<rect x="46" y="777" width="10" height="10" fill="#d0e9e9"/>
<rect x="16" y="787" width="10" height="10" fill="#dbefee"/>
<rect x="26" y="787" width="10" height="10" fill="#9fdad5"/>
<rect x="36" y="787" width="10" height="10" fill="#8cd6d0"/>
<rect x="46" y="787" width="10" height="10" fill="#9fdad6"/>
<rect x="16" y="797" width="10" height="10" fill="#a3dcd8"/>
<rect x="26" y="797" width="10" height="10" fill="#9adad5"/>
<rect x="36" y="797" width="10" height="10" fill="#e0f1f0"/>
<rect x="46" y="797" width="10" height="10" fill="#dff0ef"/>
<rect x="16" y="817" width="10" height="10" fill="#eef1f5"/>
<rect x="26" y="817" width="10" height="10" fill="#e2ebf6"/>
<rect x="36" y="817" width="10" height="10" fill="#c6ced6"/>
<rect x="16" y="827" width="10" height="10" fill="#b7bdc0"/>
<rect x="26" y="827" width="10" height="10" fill="#bfaaa6"/>
<rect x="36" y="827" width="10" height="10" fill="#8f9498"/>
<rect x="46" y="827" width="10" height="10" fill="#a3a9af"/>
<rect x="16" y="837" width="10" height="10" fill="#c2c1c0"/>
<rect x="26" y="837" width="10" height="10" fill="#76757d"/>
<rect x="36" y="837" width="10" height="10" fill="#c8b0a4"/>
<rect x="46" y="837" width="10" height="10" fill="#a5a8ac"/>
<rect x="16" y="847" width="10" height="10" fill="#ece6e3"/>
<rect x="26" y="847" width="10" height="10" fill="#c6bcba"/>
<rect x="36" y="847" width="10" height="10" fill="#c6c4c4"/>
<rect x="16" y="866" width="10" height="10" fill="#b9f1f3"/>
<rect x="26" y="866" width="10" height="10" fill="#8feef0"/>
<rect x="36" y="866" width="10" height="10" fill="#a3ecf3"/>
<rect x="16" y="876" width="10" height="10" fill="#eaf5f8"/>
<rect x="26" y="876" width="10" height="10" fill="#e9f5ec"/>
<rect x="36" y="876" width="10" height="10" fill="#e2f4f9"/>
<rect x="46" y="876" width="10" height="10" fill="#a6e1f4"/>
</svg>
<div class="abs" style="left:16px;top:13px;width:32px;height:32px;border-radius:6px;background:#dde1e5"></div>
<div class="abs" style="left:25px;top:22px;width:15px;height:15px;border-radius:50%;background:#5f6b7a;color:#e6e9ec;font-weight:bold;font-size:12px;line-height:15px;text-align:center">?</div>
<div class="abs rdiv" style="top:61px"></div>
<div class="abs rc" style="top:76px"></div>
<div class="abs rc" style="top:122px"></div>
<div class="abs rc" style="top:168px"></div>
<div class="abs rdiv" style="top:216px"></div>
<div class="abs rdiv" style="top:254px"></div>
<svg class="abs" style="left:16px;top:76px" width="34" height="34" viewBox="0 0 34 34"><path d="M25 12.2 A9.2 9.2 0 1 0 25.6 20.5" fill="none" stroke="#5f6b7a" stroke-width="1.8"/><circle cx="17" cy="17" r="5.6" fill="#5f6b7a"/><path d="M16 13.2 L16.9 15.6 L19.3 16.5 L16.9 17.4 L16 19.8 L15.1 17.4 L12.7 16.5 L15.1 15.6Z M19.6 18 L20.1 19.2 L21.3 19.7 L20.1 20.2 L19.6 21.4 L19.1 20.2 L17.9 19.7 L19.1 19.2Z" fill="#e1e5e9"/></svg>
<svg class="abs" style="left:16px;top:122px" width="34" height="34" viewBox="0 0 34 34"><path d="M17 9 C13.6 9 12 11.6 12 14.6 V18 C12 19.6 11 20.4 10 21.2 V22 H24 V21.2 C23 20.4 22 19.6 22 18 V14.6 C22 11.6 20.4 9 17 9Z" fill="#5f6b7a"/><path d="M14.8 23.3 H19.2 C19 24.4 18.2 25 17 25 C15.8 25 15 24.4 14.8 23.3Z" fill="#5f6b7a"/></svg>
<div class="abs" style="left:38px;top:122px;width:16px;height:13px;border-radius:7px;background:#f1614f;color:#fff;font-weight:bold;font-size:10px;line-height:13px;text-align:center">5</div>
<svg class="abs" style="left:16px;top:168px" width="34" height="34" viewBox="0 0 34 34"><circle cx="16.6" cy="16.6" r="8.2" fill="none" stroke="#5f6b7a" stroke-width="1.8"/><path d="M22 22.5 L25.5 25.5 L24.6 21Z" fill="#5f6b7a"/><path d="M13.2 14.2 H20.6 M12.8 19 H20.2" stroke="#5f6b7a" stroke-width="1.4" fill="none"/><path d="M15 12.2 L12.4 14.2 L15 16.2Z M18.6 17 L21.2 19 L18.6 21Z" fill="#5f6b7a"/></svg>
<svg class="abs" style="left:20px;top:224px" width="26" height="26" viewBox="0 0 26 26"><circle cx="11.1" cy="10.1" r="5.3" fill="none" stroke="#5f6b7a" stroke-width="1.9"/><path d="M15 14 L21.5 20.5" stroke="#5f6b7a" stroke-width="2.1"/></svg>
<div class="abs" style="left:6px;top:895px;width:52px;height:48px;border-radius:26px/24px;background:#f0f1f2;box-shadow:0 2px 6px rgba(0,0,0,.16)"></div>
<div class="abs" style="left:23px;top:913px;width:3px;height:3px;border-radius:50%;background:#a8adb4"></div>
<div class="abs" style="left:28px;top:913px;width:13px;height:2px;background:#a8adb4;border-radius:1px"></div>
<div class="abs" style="left:23px;top:918px;width:18px;height:2px;background:#a8adb4;border-radius:1px"></div>
<div class="abs" style="left:23px;top:923px;width:18px;height:2px;background:#a8adb4;border-radius:1px"></div>
</div>
</body>
</html>
